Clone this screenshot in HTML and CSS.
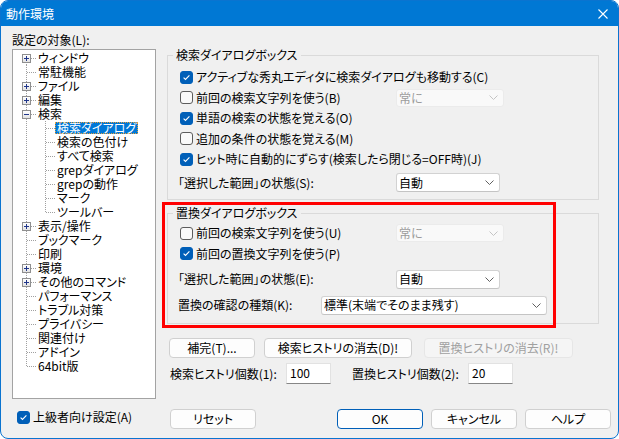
FILE: index.html
```html
<!DOCTYPE html>
<html lang="ja">
<head>
    <meta charset="UTF-8">
    <title>動作環境</title>
    <link rel="stylesheet" href="styles.css">
</head>
<body>
<div class="win">
    <div class="titlebar">
        <span class="title">動作環境</span>
        <svg class="close" width="10" height="10" viewBox="0 0 10 10"><path d="M0.5 0.5L9.5 9.5M9.5 0.5L0.5 9.5" stroke="#fff" stroke-width="1.1" fill="none"/></svg>
    </div>

    <div class="main">
        <div class="left">
            <div class="caption">設定の対象(L):</div>
            <div class="tree">
                <div class="node"><span class="g f"><i class="exp"></i></span><span class="lbl">ウィンドウ</span></div>
                <div class="node"><span class="g t"></span><span class="lbl">常駐機能</span></div>
                <div class="node"><span class="g t"><i class="exp"></i></span><span class="lbl">ファイル</span></div>
                <div class="node"><span class="g t"><i class="exp"></i></span><span class="lbl">編集</span></div>
                <div class="node"><span class="g t"><i class="exp open"></i></span><span class="lbl">検索</span></div>
                <div class="node"><span class="g p"></span><span class="g1 t"></span><span class="lbl sel">検索ダイアログ</span></div>
                <div class="node"><span class="g p"></span><span class="g1 t"></span><span class="lbl">検索の色付け</span></div>
                <div class="node"><span class="g p"></span><span class="g1 t"></span><span class="lbl">すべて検索</span></div>
                <div class="node"><span class="g p"></span><span class="g1 t"></span><span class="lbl">grepダイアログ</span></div>
                <div class="node"><span class="g p"></span><span class="g1 t"></span><span class="lbl">grepの動作</span></div>
                <div class="node"><span class="g p"></span><span class="g1 t"></span><span class="lbl">マーク</span></div>
                <div class="node"><span class="g p"></span><span class="g1 l"></span><span class="lbl">ツールバー</span></div>
                <div class="node"><span class="g t"><i class="exp"></i></span><span class="lbl">表示/操作</span></div>
                <div class="node"><span class="g t"></span><span class="lbl">ブックマーク</span></div>
                <div class="node"><span class="g t"></span><span class="lbl">印刷</span></div>
                <div class="node"><span class="g t"><i class="exp"></i></span><span class="lbl">環境</span></div>
                <div class="node"><span class="g t"><i class="exp"></i></span><span class="lbl">その他のコマンド</span></div>
                <div class="node"><span class="g t"></span><span class="lbl">パフォーマンス</span></div>
                <div class="node"><span class="g t"></span><span class="lbl">トラブル対策</span></div>
                <div class="node"><span class="g t"></span><span class="lbl">プライバシー</span></div>
                <div class="node"><span class="g t"></span><span class="lbl">関連付け</span></div>
                <div class="node"><span class="g t"></span><span class="lbl">アドイン</span></div>
                <div class="node"><span class="g l"></span><span class="lbl">64bit版</span></div>
            </div>
        </div>

        <div class="right">
            <fieldset class="grp">
                <legend>検索ダイアログボックス</legend>
                <div class="row"><label class="chk"><span class="cb on"><svg width="11" height="11" viewBox="0 0 11 11"><path d="M2.6 5.6L4.5 7.5L8.4 3.4" stroke="#fff" stroke-width="1.1" fill="none"/></svg></span>アクティブな秀丸エディタに検索ダイアログも移動する(C)</label></div>
                <div class="row"><label class="chk w"><span class="cb"></span>前回の検索文字列を使う(B)</label><div class="combo off">常に<svg width="9" height="5" viewBox="0 0 9 5"><path d="M0.5 0.5L4.5 4.5L8.5 0.5" stroke="#c4c4c4" fill="none"/></svg></div></div>
                <div class="row"><label class="chk"><span class="cb on"><svg width="11" height="11" viewBox="0 0 11 11"><path d="M2.6 5.6L4.5 7.5L8.4 3.4" stroke="#fff" stroke-width="1.1" fill="none"/></svg></span>単語の検索の状態を覚える(O)</label></div>
                <div class="row"><label class="chk"><span class="cb"></span>追加の条件の状態を覚える(M)</label></div>
                <div class="row"><label class="chk"><span class="cb on"><svg width="11" height="11" viewBox="0 0 11 11"><path d="M2.6 5.6L4.5 7.5L8.4 3.4" stroke="#fff" stroke-width="1.1" fill="none"/></svg></span>ヒット時に自動的にずらす(検索したら閉じる=OFF時)(J)</label></div>
                <div class="row c"><span class="key">「選択した範囲」の状態(S):</span><div class="combo">自動<svg width="9" height="5" viewBox="0 0 9 5"><path d="M0.5 0.5L4.5 4.5L8.5 0.5" stroke="#606060" fill="none"/></svg></div></div>
            </fieldset>

            <fieldset class="grp grp2">
                <legend>置換ダイアログボックス</legend>
                <div class="row"><label class="chk w"><span class="cb"></span>前回の検索文字列を使う(U)</label><div class="combo off">常に<svg width="9" height="5" viewBox="0 0 9 5"><path d="M0.5 0.5L4.5 4.5L8.5 0.5" stroke="#c4c4c4" fill="none"/></svg></div></div>
                <div class="row"><label class="chk"><span class="cb on"><svg width="11" height="11" viewBox="0 0 11 11"><path d="M2.6 5.6L4.5 7.5L8.4 3.4" stroke="#fff" stroke-width="1.1" fill="none"/></svg></span>前回の置換文字列を使う(P)</label></div>
                <div class="row c gap"><span class="key">「選択した範囲」の状態(E):</span><div class="combo">自動<svg width="9" height="5" viewBox="0 0 9 5"><path d="M0.5 0.5L4.5 4.5L8.5 0.5" stroke="#606060" fill="none"/></svg></div></div>
                <div class="row c"><span class="key k2">置換の確認の種類(K):</span><div class="combo wide">標準(末端でそのまま残す)<svg width="9" height="5" viewBox="0 0 9 5"><path d="M0.5 0.5L4.5 4.5L8.5 0.5" stroke="#606060" fill="none"/></svg></div></div>
            </fieldset>

            <div class="btns">
                <button class="btn b1">補完(T)...</button>
                <button class="btn b2">検索ヒストリの消去(D)!</button>
                <button class="btn b3 off">置換ヒストリの消去(R)!</button>
            </div>

            <div class="hist">
                <span class="hk">検索ヒストリ個数(1):</span>
                <div class="num">100</div>
                <span class="hk hk2">置換ヒストリ個数(2):</span>
                <div class="num">20</div>
            </div>
        </div>
    </div>

    <div class="foot">
        <label class="adv"><span class="cb on"><svg width="11" height="11" viewBox="0 0 11 11"><path d="M2.6 5.6L4.5 7.5L8.4 3.4" stroke="#fff" stroke-width="1.1" fill="none"/></svg></span>上級者向け設定(A)</label>
        <button class="btn w86">リセット</button>
        <button class="btn w86 def ok">OK</button>
        <button class="btn w86">キャンセル</button>
        <button class="btn w86">ヘルプ</button>
    </div>

    <div class="mark"></div>
</div>
</body>
</html>
```

FILE: styles.css
```css
body {
    margin: 0;
    background: #fff;
    font-family: "Noto Sans CJK JP", "Noto Sans", sans-serif;
    font-size: 12px;
    line-height: 16px;
    color: #000;
    font-feature-settings: "palt";
}

.win {
    position: relative;
    width: 619px;
    height: 439px;
    box-sizing: border-box;
    border: 1px solid #0a74d0;
    border-radius: 8px;
    background: #f0f0f0;
    overflow: hidden;
}

.titlebar {
    height: 25px;
    background: #0078d4;
    color: #fff;
    display: flex;
    align-items: center;
    justify-content: space-between;
    padding: 0 10px 0 5px;
}
.close { display: block; }

.main {
    display: grid;
    grid-template-columns: 144px 1fr;
    column-gap: 11px;
    padding: 0 7px 0 11px;
}

/* tree */
.caption { margin-top: 6px; white-space: nowrap; }
.tree {
    margin-top: 1px;
    height: 350px;
    box-sizing: border-box;
    border: 1px solid #a3a3a3;
    background: #fff;
    padding-top: 1px;
}
.node { display: flex; align-items: center; height: 14px; }
.lbl { padding: 0 2px; height: 12px; line-height: 12px; white-space: nowrap; }
.lbl.sel {
    background: #0078d7;
    color: #fff;
    outline: 1px dotted #e9a13a;
    outline-offset: -1px;
}
.g, .g1 { position: relative; flex: none; height: 14px; }
.g { width: 23px; }
.g1 { width: 19px; }
.g.t {
    background:
        repeating-linear-gradient(#a0a0a0 0 1px, transparent 1px 2px) 13px 0 / 1px 14px no-repeat,
        repeating-linear-gradient(to right, #a0a0a0 0 1px, transparent 1px 2px) 14px 7px / 9px 1px no-repeat;
}
.g.f {
    background:
        repeating-linear-gradient(#a0a0a0 0 1px, transparent 1px 2px) 13px 7px / 1px 7px no-repeat,
        repeating-linear-gradient(to right, #a0a0a0 0 1px, transparent 1px 2px) 14px 7px / 9px 1px no-repeat;
}
.g.l {
    background:
        repeating-linear-gradient(#a0a0a0 0 1px, transparent 1px 2px) 13px 0 / 1px 8px no-repeat,
        repeating-linear-gradient(to right, #a0a0a0 0 1px, transparent 1px 2px) 14px 7px / 9px 1px no-repeat;
}
.g.p {
    background: repeating-linear-gradient(#a0a0a0 0 1px, transparent 1px 2px) 13px 0 / 1px 14px no-repeat;
}
.g1.t {
    background:
        repeating-linear-gradient(#a0a0a0 0 1px, transparent 1px 2px) 9px 0 / 1px 14px no-repeat,
        repeating-linear-gradient(to right, #a0a0a0 0 1px, transparent 1px 2px) 10px 7px / 9px 1px no-repeat;
}
.g1.l {
    background:
        repeating-linear-gradient(#a0a0a0 0 1px, transparent 1px 2px) 9px 0 / 1px 8px no-repeat,
        repeating-linear-gradient(to right, #a0a0a0 0 1px, transparent 1px 2px) 10px 7px / 9px 1px no-repeat;
}
.exp {
    position: absolute;
    left: 9px;
    top: 3px;
    width: 9px;
    height: 9px;
    box-sizing: border-box;
    border: 1px solid #8f8f8f;
    background: linear-gradient(#fff, #e2e2e2);
}
.exp::before, .exp::after {
    content: "";
    position: absolute;
    background: #20368a;
}
.exp::before { left: 1px; top: 3px; width: 5px; height: 1px; }
.exp::after { left: 3px; top: 1px; width: 1px; height: 5px; }
.exp.open::after { display: none; }

/* right side */
.right { padding-top: 21px; }
.grp {
    margin: 0;
    width: 432px;
    min-width: 0;
    box-sizing: border-box;
    border: 1px solid #dadada;
    padding: 4px 0 3.5px;
}
.grp legend { margin-left: 5px; padding: 0 3px; line-height: 16px; }
.grp2 { margin-top: 5px; padding: 2px 0 5px; }
.row { display: flex; align-items: center; height: 20.5px; padding-left: 12px; white-space: nowrap; }
.row.c { height: 26px; padding-left: 10px; }
.row.gap { margin-top: 2px; }

.chk, .adv { display: flex; align-items: center; gap: 3px; white-space: nowrap; }
.chk.w { width: 216px; flex: none; }
.cb {
    width: 13px;
    height: 13px;
    box-sizing: border-box;
    border: 1px solid #5c5c5c;
    border-radius: 3px;
    background: #f9f9f9;
    flex: none;
}
.cb.on { background: #005fb8; border-color: #005fb8; }
.cb svg { display: block; }

.key { width: 218px; flex: none; }
.key.k2 { width: 143px; }
.combo {
    display: flex;
    align-items: center;
    justify-content: space-between;
    width: 104px;
    height: 19px;
    box-sizing: border-box;
    border: 1px solid #d2d2d2;
    border-bottom-color: #c4c4c4;
    border-radius: 3px;
    background: #fff;
    padding: 0 5px 0 2px;
}
.combo.off {
    width: 108px;
    height: 18px;
    background: #f9f9f9;
    border-color: #ebebeb;
    color: #9c9c9c;
}
.combo.wide { width: 226px; }

.btn {
    height: 20px;
    box-sizing: border-box;
    border: 1px solid #d0d0d0;
    border-radius: 4px;
    background: #fdfdfd;
    font: inherit;
    line-height: 18px;
    color: #000;
    padding: 0;
    text-align: center;
}
.btn.off { background: #f5f5f5; border-color: #e6e6e6; color: #a0a0a0; }
.btn.def { border-color: #005fb8; box-shadow: inset 0 0 0 1px #fdfdfd; }

.btns { display: flex; gap: 9px; margin-top: 14px; padding-left: 2px; }
.b1 { width: 86px; }
.b2 { width: 148px; }
.b3 { width: 149px; margin-left: 3px; }

.hist { display: flex; align-items: center; height: 21px; margin-top: 5px; padding-left: 3px; white-space: nowrap; }
.hk { width: 116px; flex: none; }
.hk2 { margin-left: 21px; }
.num {
    width: 45px;
    height: 21px;
    box-sizing: border-box;
    background: #fff;
    border: 1px solid #e2e2e2;
    border-bottom-color: #868686;
    padding-left: 3px;
    line-height: 17px;
}

.foot { display: flex; align-items: center; height: 20px; margin-top: 10px; padding: 0 7px 0 16px; }
.adv { width: 153px; flex: none; margin-top: -4px; }
.w86 { width: 86px; }
.foot .btn + .btn { margin-left: 8px; }
.foot .btn.ok { margin-left: auto; }

.mark {
    position: absolute;
    left: 161px;
    top: 201px;
    width: 394px;
    height: 126px;
    box-sizing: border-box;
    border: 3px solid #f00;
}
```
